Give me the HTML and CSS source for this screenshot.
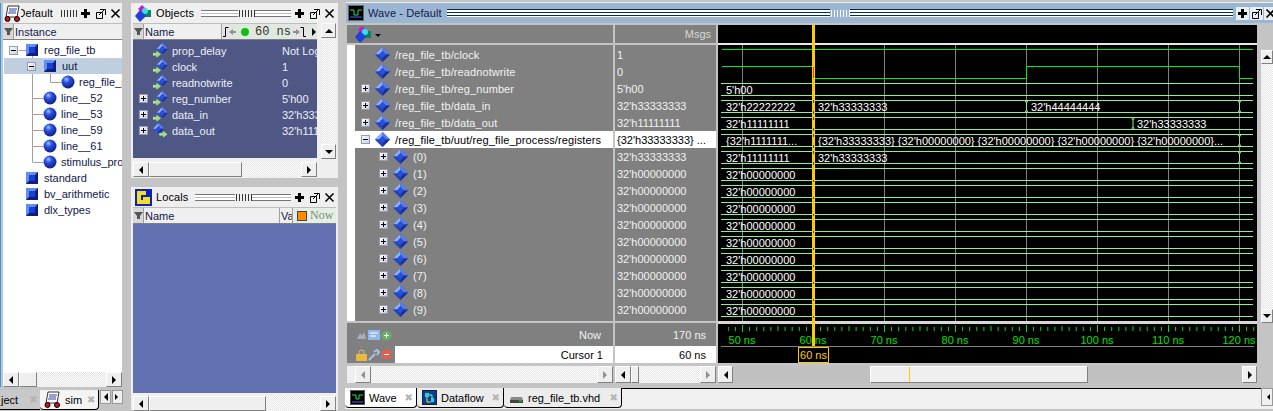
FILE: index.html
```html
<!DOCTYPE html>
<html lang="en">
  <head>
    <meta charset="UTF-8" />
    <title>Wave - Default</title>
    <link rel="stylesheet" href="styles.css">
  </head>
  <body>
    <!-- shared icons -->
    <svg class="defs" width="0" height="0">
      <defs>
        <radialGradient id="ballFill" cx="0.38" cy="0.3" r="0.75">
          <stop offset="0" stop-color="#9fc0ff" />
          <stop offset="0.35" stop-color="#2a50e0" />
          <stop offset="1" stop-color="#0a1a80" />
        </radialGradient>
        <linearGradient id="boxFill" x1="0" y1="0" x2="1" y2="1">
          <stop offset="0" stop-color="#ffffff" />
          <stop offset="1" stop-color="#c4cce8" />
        </linearGradient>
        <pattern id="ticks" width="71" height="8" x="742" y="324" patternUnits="userSpaceOnUse">
          <path d="M0.5 1v7M7.6 3v4M14.7 3v4M21.8 3v4M28.9 3v4M36 2v5M43.1 3v4M50.2 3v4M57.3 3v4M64.4 3v4" stroke="#00e000" fill="none" />
        </pattern>
      </defs>
      <symbol id="sq" viewBox="0 0 12 12">
        <rect width="12" height="12" fill="#1740dc" />
        <path d="M0 0H12L9 3H3V9L0 12Z" fill="#5f8fe8" />
        <path d="M12 0V12H0L3 9H9V3Z" fill="#10207a" />
      </symbol>
      <symbol id="ball" viewBox="0 0 14 14">
        <circle cx="7" cy="7" r="6.5" fill="url(#ballFill)" />
      </symbol>
      <symbol id="dia" viewBox="0 0 16 16">
        <path d="M8 0L16 8L8 16L0 8Z" fill="#2a4fd8" />
        <path d="M8 0L8 4L4 8H0Z" fill="#8fb0f4" />
        <path d="M8 0L16 8H12L8 4Z" fill="#5a80e8" />
        <path d="M16 8L8 16V12L12 8Z" fill="#1a2e98" />
        <path d="M0 8L8 16V12L4 8Z" fill="#2244c0" />
      </symbol>
      <symbol id="dia-in" viewBox="0 0 16 16">
        <path d="M10 0L16 6L10 12L4 6Z" fill="#2a4fd8" />
        <path d="M10 0V3L7 6H4Z" fill="#8fb0f4" />
        <path d="M10 0L16 6H13L10 3Z" fill="#5a80e8" />
        <path d="M16 6L10 12V9L13 6Z" fill="#1a2e98" />
        <path d="M0 11H4V9L8 12L4 15V13H0Z" fill="#7cf03c" stroke="#fff" stroke-width="0.5" />
      </symbol>
      <symbol id="dia-out" viewBox="0 0 16 16">
        <path d="M6 0L12 6L6 12L0 6Z" fill="#2a4fd8" />
        <path d="M6 0V3L3 6H0Z" fill="#8fb0f4" />
        <path d="M6 0L12 6H9L6 3Z" fill="#5a80e8" />
        <path d="M12 6L6 12V9L9 6Z" fill="#1a2e98" />
        <path d="M7 11H11V9L15 12L11 15V13H7Z" fill="#7cf03c" stroke="#fff" stroke-width="0.5" />
      </symbol>
      <symbol id="box-plus" viewBox="0 0 9 9">
        <rect x="0.5" y="0.5" width="8" height="8" fill="url(#boxFill)" stroke="#9a9aa8" />
        <path d="M2 4.5H7M4.5 2V7" stroke="#000" />
      </symbol>
      <symbol id="box-minus" viewBox="0 0 9 9">
        <rect x="0.5" y="0.5" width="8" height="8" fill="url(#boxFill)" stroke="#9a9aa8" />
        <path d="M2 4.5H7" stroke="#000" />
      </symbol>
      <symbol id="btn-plus" viewBox="0 0 13 13">
        <path d="M5 2H8V5H11V8H8V11H5V8H2V5H5Z" fill="#000" />
      </symbol>
      <symbol id="btn-undock" viewBox="0 0 13 13">
        <path d="M2.5 5.5H8.5V11.5H2.5ZM6 2.5H11.5V8" fill="none" stroke="#000" />
        <path d="M5 8L10 3" stroke="#000" />
      </symbol>
      <symbol id="btn-close" viewBox="0 0 13 13">
        <path d="M2.5 2.5L10.5 10.5M10.5 2.5L2.5 10.5" stroke="#000" stroke-width="1.6" />
      </symbol>
      <symbol id="filter" viewBox="0 0 9 9">
        <path d="M0 1H9L6 5V8H3V5Z" fill="#555" />
      </symbol>
      <symbol id="sim-icon" viewBox="0 0 17 17">
        <path d="M4 1H15L13 12H2Z" fill="#fff" stroke="#333" />
        <path d="M5 4H13M5 6H12M4 8H12" stroke="#3040a0" />
        <circle cx="3.5" cy="14" r="2.5" fill="#d01020" stroke="#000" />
        <circle cx="13" cy="14" r="2.5" fill="#d01020" stroke="#000" />
      </symbol>
      <symbol id="objects-icon" viewBox="0 0 17 17">
        <path d="M7 0L11 4L7 8L3 4Z" fill="#c020c0" />
        <rect x="8" y="5" width="8" height="7" fill="#108060" />
        <circle cx="10" cy="6" r="3" fill="#30e0f0" />
        <path d="M5 5L11 11L5 17L0 11Z" fill="#2040d8" />
      </symbol>
    </svg>

    <div class="desk">
      <!-- left: structure -->
      <div class="left-col">
        <div class="panel left-panel">
          <div class="title">
            <svg class="title-icon"><use href="#sim-icon" /></svg>
            <span class="title-text clip-d">Default</span>
            <span class="dots short"></span>
            <span class="title-btns">
              <svg><use href="#btn-plus" /></svg>
              <svg><use href="#btn-undock" /></svg>
              <svg><use href="#btn-close" /></svg>
            </span>
          </div>
          <div class="head">
            <span class="head-filter"><svg><use href="#filter" /></svg></span>
            <span class="head-cell grow">Instance</span>
          </div>
          <div class="tree">
            <svg class="tree-lines" width="119" height="190" viewBox="3 40 119 190">
              <path d="M19 50.5H26M32.5 56V162.5M37 66.5H44M50.5 72V82.5H61M33 98.5H43M33 114.5H43M33 130.5H43M33 146.5H43M33 162.5H43" stroke="#a0a0a0" fill="none" />
            </svg>
            <div class="node l0"><svg class="xbox"><use href="#box-minus" /></svg><svg class="sq"><use href="#sq" /></svg><span>reg_file_tb</span></div>
            <div class="node l1 picked"><svg class="xbox"><use href="#box-minus" /></svg><svg class="sq"><use href="#sq" /></svg><span>uut</span></div>
            <div class="node l2"><svg class="ball"><use href="#ball" /></svg><span>reg_file_process</span></div>
            <div class="node l3"><svg class="ball"><use href="#ball" /></svg><span>line__52</span></div>
            <div class="node l3"><svg class="ball"><use href="#ball" /></svg><span>line__53</span></div>
            <div class="node l3"><svg class="ball"><use href="#ball" /></svg><span>line__59</span></div>
            <div class="node l3"><svg class="ball"><use href="#ball" /></svg><span>line__61</span></div>
            <div class="node l3"><svg class="ball"><use href="#ball" /></svg><span>stimulus_process</span></div>
            <div class="node l4"><svg class="sq"><use href="#sq" /></svg><span>standard</span></div>
            <div class="node l4"><svg class="sq"><use href="#sq" /></svg><span>bv_arithmetic</span></div>
            <div class="node l4"><svg class="sq"><use href="#sq" /></svg><span>dlx_types</span></div>
          </div>
          <div class="hscroll">
            <span class="sb-btn"><i class="arrow left"></i></span>
            <span class="sb-thumb left-thumb"></span>
            <span class="sb-track"></span>
            <span class="sb-btn"><i class="arrow right"></i></span>
          </div>
        </div>
        <div class="left-tabs">
          <span class="ltab off">ject <b class="tab-x">&#10006;</b></span>
          <span class="ltab on"><svg class="tab-icon"><use href="#sim-icon" /></svg>sim <b class="tab-x">&#10006;</b></span>
          <span class="tab-nav"><i class="arrow left"></i></span>
          <span class="tab-nav"><i class="arrow right hollow"></i></span>
        </div>
      </div>

      <!-- middle: objects and locals -->
      <div class="mid-col">
        <div class="panel objects">
          <div class="title">
            <svg class="title-icon"><use href="#objects-icon" /></svg>
            <span class="title-text">Objects</span>
            <span class="lines"></span><span class="dots"></span><span class="lines"></span>
            <span class="title-btns">
              <svg><use href="#btn-plus" /></svg>
              <svg><use href="#btn-undock" /></svg>
              <svg><use href="#btn-close" /></svg>
            </span>
          </div>
          <div class="panel-body">
            <div class="panel-main">
              <div class="head">
                <span class="head-filter"><svg><use href="#filter" /></svg></span>
                <span class="head-cell grow">Name</span>
                <span class="cursor-tool">
                  <svg class="tool-btn" viewBox="0 0 15 14"><path d="M3.5 2.5H6.5M3.5 2.5V11.5M3.5 11.5H1" stroke="#000" fill="none" /><path d="M7 7L11 4V6H14V8H11V10Z" fill="#909090" /></svg>
                  <span class="green-dot"></span>
                  <span class="tool-time">60 ns</span>
                  <svg class="tool-btn" viewBox="0 0 15 14"><path d="M11.5 2.5H8.5M11.5 2.5V11.5M11.5 11.5H14" stroke="#000" fill="none" /><path d="M8 7L4 4V6H1V8H4V10Z" fill="#909090" /></svg>
                  <i class="arrow right"></i>
                </span>
              </div>
              <div class="obj-list">
                <div class="obj"><i class="obj-gap"></i><svg class="dia"><use href="#dia-in" /></svg><span class="obj-name">prop_delay</span><span>Not Logged</span></div>
                <div class="obj"><i class="obj-gap"></i><svg class="dia"><use href="#dia-in" /></svg><span class="obj-name">clock</span><span>1</span></div>
                <div class="obj"><i class="obj-gap"></i><svg class="dia"><use href="#dia-in" /></svg><span class="obj-name">readnotwrite</span><span>0</span></div>
                <div class="obj"><svg class="xbox"><use href="#box-plus" /></svg><svg class="dia"><use href="#dia-in" /></svg><span class="obj-name">reg_number</span><span>5'h00</span></div>
                <div class="obj"><svg class="xbox"><use href="#box-plus" /></svg><svg class="dia"><use href="#dia-in" /></svg><span class="obj-name">data_in</span><span>32'h33333333</span></div>
                <div class="obj"><svg class="xbox"><use href="#box-plus" /></svg><svg class="dia"><use href="#dia-out" /></svg><span class="obj-name">data_out</span><span>32'h11111111</span></div>
              </div>
              <div class="hscroll">
                <span class="sb-btn"><i class="arrow left"></i></span>
                <span class="sb-thumb obj-thumb"></span>
                <span class="sb-track"></span>
                <span class="sb-btn"><i class="arrow right"></i></span>
              </div>
            </div>
            <div class="vscroll">
              <span class="sb-btn"><i class="arrow up"></i></span>
              <span class="sb-track"></span>
              <span class="sb-btn"><i class="arrow down"></i></span>
            </div>
          </div>
        </div>
        <div class="panel locals">
          <div class="title">
            <svg class="title-icon" viewBox="0 0 17 17">
              <rect width="17" height="17" fill="#1020c0" />
              <path d="M2 2H11V6H6V11H15V15H2Z" fill="#f0e020" />
              <path d="M8 8H15V11H8Z" fill="#f0e020" />
            </svg>
            <span class="title-text">Locals</span>
            <span class="lines"></span><span class="dots"></span><span class="lines"></span>
            <span class="title-btns">
              <svg><use href="#btn-plus" /></svg>
              <svg><use href="#btn-undock" /></svg>
              <svg><use href="#btn-close" /></svg>
            </span>
          </div>
          <div class="head">
            <span class="head-filter"><svg><use href="#filter" /></svg></span>
            <span class="head-cell name-cell">Name</span>
            <span class="head-cell va-cell">Va</span>
            <span class="now-tool"><i class="orange-sq"></i>Now</span>
          </div>
          <div class="local-list"></div>
          <div class="hscroll">
            <span class="sb-btn"><i class="arrow left"></i></span>
            <span class="sb-thumb local-thumb"></span>
            <span class="sb-track"></span>
            <span class="sb-btn"><i class="arrow right"></i></span>
          </div>
        </div>
      </div>

      <!-- right: wave window -->
      <div class="wave-col">
        <div class="wave-title">
          <svg class="wave-icon" viewBox="0 0 16 16">
            <rect x="0.5" y="0.5" width="15" height="15" fill="#000" stroke="#666" />
            <path d="M2 5H6V10H10V5H14" stroke="#20e060" fill="none" />
            <path d="M2 12H14" stroke="#4060ff" />
          </svg>
          <span class="wave-name">Wave - Default</span>
          <span class="wave-lines"></span><span class="dots wave-dots"></span><span class="wave-lines"></span>
          <span class="title-btns wave-btns">
            <svg><use href="#btn-plus" /></svg>
            <svg><use href="#btn-undock" /></svg>
            <svg><use href="#btn-close" /></svg>
          </span>
        </div>
        <div class="wave-body">
          <div class="name-col">
            <div class="col-head"><svg class="head-icon"><use href="#objects-icon" /></svg><i class="caret"></i></div>
            <div class="sig-list">
              <div class="sig"><i class="nobox"></i><svg class="dia"><use href="#dia" /></svg><span>/reg_file_tb/clock</span></div>
              <div class="sig"><i class="nobox"></i><svg class="dia"><use href="#dia" /></svg><span>/reg_file_tb/readnotwrite</span></div>
              <div class="sig"><svg class="xbox"><use href="#box-plus" /></svg><svg class="dia"><use href="#dia" /></svg><span>/reg_file_tb/reg_number</span></div>
              <div class="sig"><svg class="xbox"><use href="#box-plus" /></svg><svg class="dia"><use href="#dia" /></svg><span>/reg_file_tb/data_in</span></div>
              <div class="sig"><svg class="xbox"><use href="#box-plus" /></svg><svg class="dia"><use href="#dia" /></svg><span>/reg_file_tb/data_out</span></div>
              <div class="sig picked"><svg class="xbox"><use href="#box-minus" /></svg><svg class="dia"><use href="#dia" /></svg><span>/reg_file_tb/uut/reg_file_process/registers</span></div>
              <div class="sig child"><svg class="xbox"><use href="#box-plus" /></svg><svg class="dia"><use href="#dia" /></svg><span>(0)</span></div>
              <div class="sig child"><svg class="xbox"><use href="#box-plus" /></svg><svg class="dia"><use href="#dia" /></svg><span>(1)</span></div>
              <div class="sig child"><svg class="xbox"><use href="#box-plus" /></svg><svg class="dia"><use href="#dia" /></svg><span>(2)</span></div>
              <div class="sig child"><svg class="xbox"><use href="#box-plus" /></svg><svg class="dia"><use href="#dia" /></svg><span>(3)</span></div>
              <div class="sig child"><svg class="xbox"><use href="#box-plus" /></svg><svg class="dia"><use href="#dia" /></svg><span>(4)</span></div>
              <div class="sig child"><svg class="xbox"><use href="#box-plus" /></svg><svg class="dia"><use href="#dia" /></svg><span>(5)</span></div>
              <div class="sig child"><svg class="xbox"><use href="#box-plus" /></svg><svg class="dia"><use href="#dia" /></svg><span>(6)</span></div>
              <div class="sig child"><svg class="xbox"><use href="#box-plus" /></svg><svg class="dia"><use href="#dia" /></svg><span>(7)</span></div>
              <div class="sig child"><svg class="xbox"><use href="#box-plus" /></svg><svg class="dia"><use href="#dia" /></svg><span>(8)</span></div>
              <div class="sig child"><svg class="xbox"><use href="#box-plus" /></svg><svg class="dia"><use href="#dia" /></svg><span>(9)</span></div>
            </div>
            <div class="col-foot">
              <div class="foot-now">
                <span class="foot-icons">
                  <svg viewBox="0 0 11 11" width="11" height="11"><path d="M1 9L4 3L6 6L8 2L10 9Z" fill="#a8b0c0" /></svg>
                  <svg viewBox="0 0 12 12" width="12" height="12"><rect y="1" width="12" height="10" fill="#90b8e8" /><path d="M2 4H10M2 7H8" stroke="#fff" /></svg>
                  <svg viewBox="0 0 11 11" width="11" height="11"><circle cx="5.5" cy="5.5" r="5" fill="#68b068" /><path d="M3 5.5H8M5.5 3V8" stroke="#fff" /></svg>
                </span>
                <span>Now</span>
              </div>
              <div class="foot-cursor">
                <span class="foot-icons">
                  <svg viewBox="0 0 11 12" width="11" height="12"><path d="M3 6V3.5A2.5 2.5 0 0 1 8 3.5V6" fill="none" stroke="#d8c080" /><rect y="5" width="11" height="7" fill="#e8b840" /></svg>
                  <svg viewBox="0 0 12 12" width="12" height="12"><path d="M1 11L7 5M6 3L9 1L11 3L9 6" stroke="#a8c0e8" stroke-width="2" fill="none" /></svg>
                  <svg viewBox="0 0 11 11" width="11" height="11"><circle cx="5.5" cy="5.5" r="5" fill="#e06050" /><path d="M3 5.5H8" stroke="#fff" /></svg>
                </span>
                <span class="foot-white">Cursor 1</span>
              </div>
            </div>
            <div class="hscroll name-scroll">
              <span class="sb-btn"><i class="arrow left dim"></i></span>
              <span class="sb-track"></span>
              <span class="sb-btn"><i class="arrow right dim"></i></span>
            </div>
          </div>
          <div class="val-col">
            <div class="col-head msgs">Msgs</div>
            <div class="val-list">
              <div class="val">1</div>
              <div class="val">0</div>
              <div class="val">5'h00</div>
              <div class="val">32'h33333333</div>
              <div class="val">32'h11111111</div>
              <div class="val picked">{32'h33333333} ...</div>
              <div class="val">32'h33333333</div>
              <div class="val">32'h00000000</div>
              <div class="val">32'h00000000</div>
              <div class="val">32'h00000000</div>
              <div class="val">32'h00000000</div>
              <div class="val">32'h00000000</div>
              <div class="val">32'h00000000</div>
              <div class="val">32'h00000000</div>
              <div class="val">32'h00000000</div>
              <div class="val">32'h00000000</div>
            </div>
            <div class="col-foot">
              <div class="foot-now val-now">170 ns</div>
              <div class="foot-white val-cursor">60 ns</div>
            </div>
            <div class="hscroll">
              <span class="sb-btn"><i class="arrow left"></i></span>
              <span class="sb-thumb val-thumb"></span>
              <span class="sb-track"></span>
              <span class="sb-btn"><i class="arrow right dim"></i></span>
            </div>
          </div>
          <div class="plot-col">
            <!-- viewBox uses page coordinates -->
            <svg class="plot" width="539" height="338" viewBox="718 25 539 338">
              <rect x="718" y="25" width="539" height="338" fill="#000" />
              <rect x="718" y="43" width="539" height="2" fill="#e8e8e8" />
              <rect x="718" y="321" width="539" height="3" fill="#d8d8d8" />
              <path class="grid" d="M742.5 45V321M884.5 45V321M955.5 45V321M1026.5 45V321M1097.5 45V321M1168.5 45V321M1239.5 45V321" />
              <path class="logic" d="M722 49.5H1253M722 66.5H813.5V78.5H1026.5V66.5H1239.5V78.5H1253" />
              <path class="bus" d="M721 83.5H1253M721 95.5H1253
                M721 100.5H1253M721 112.5H1253
                M721 117.5H1253M721 129.5H1253
                M721 134.5H1253M721 146.5H1253
                M721 151.5H1253M721 163.5H1253
                M721 168.5H1253M721 180.5H1253
                M721 185.5H1253M721 197.5H1253
                M721 202.5H1253M721 214.5H1253
                M721 219.5H1253M721 231.5H1253
                M721 236.5H1253M721 248.5H1253
                M721 253.5H1253M721 265.5H1253
                M721 270.5H1253M721 282.5H1253
                M721 287.5H1253M721 299.5H1253
                M721 304.5H1253M721 316.5H1253" />
              <!-- bus transitions -->
              <path class="bus" d="M1025 100.5L1026.5 103V110L1025 112.5M1028 100.5L1026.5 103M1026.5 110L1028 112.5
                M1238 100.5L1239.5 103V110L1238 112.5M1241 100.5L1239.5 103M1239.5 110L1241 112.5
                M1131.5 117.5L1133 120V127L1131.5 129.5M1134.5 117.5L1133 120M1133 127L1134.5 129.5
                M1238 134.5L1239.5 137V144L1238 146.5M1241 134.5L1239.5 137M1239.5 144L1241 146.5
                M1238 151.5L1239.5 154V161L1238 163.5M1241 151.5L1239.5 154M1239.5 161L1241 163.5" />
              <g class="bus-text">
                <text x="726" y="94">5'h00</text>
                <text x="726" y="111">32'h22222222</text>
                <text x="818" y="111">32'h33333333</text>
                <text x="1031" y="111">32'h44444444</text>
                <text x="726" y="128">32'h11111111</text>
                <text x="1137" y="128">32'h33333333</text>
                <text x="726" y="145">{32'h1111111...</text>
                <text x="818" y="145">{32'h33333333} {32'h00000000} {32'h00000000} {32'h00000000} {32'h00000000}...</text>
                <text x="726" y="162">32'h11111111</text>
                <text x="818" y="162">32'h33333333</text>
                <text x="726" y="179">32'h00000000</text>
                <text x="726" y="196">32'h00000000</text>
                <text x="726" y="213">32'h00000000</text>
                <text x="726" y="230">32'h00000000</text>
                <text x="726" y="247">32'h00000000</text>
                <text x="726" y="264">32'h00000000</text>
                <text x="726" y="281">32'h00000000</text>
                <text x="726" y="298">32'h00000000</text>
                <text x="726" y="315">32'h00000000</text>
              </g>
              <!-- time axis -->
              <rect x="728" y="324" width="528" height="8" fill="url(#ticks)" shape-rendering="crispEdges" />
              <g class="time-text">
                <text x="742" y="344">50 ns</text>
                <text x="813" y="344">60 ns</text>
                <text x="884" y="344">70 ns</text>
                <text x="955" y="344">80 ns</text>
                <text x="1026" y="344">90 ns</text>
                <text x="1097" y="344">100 ns</text>
                <text x="1168" y="344">110 ns</text>
                <text x="1239" y="344">120 ns</text>
              </g>
              <path class="axis" d="M721 346.5H1254" />
              <!-- cursor -->
              <rect x="812" y="25" width="3" height="321" fill="#ffcc00" />
              <path d="M813.5 67V78" stroke="#ff3000" />
              <path class="cross" d="M813.5 100V103M813.5 111V114M813.5 117V120M813.5 128V131M813.5 134V137M813.5 145V148M813.5 151V154M813.5 162V165M813.5 180V182M813.5 197V199M813.5 214V216M813.5 231V233M813.5 248V250M813.5 265V267M813.5 282V284M813.5 299V301M813.5 316V318" />
              <rect class="cursor-box" x="798.5" y="347.5" width="30" height="15" />
              <text class="cursor-text" x="813.5" y="359">60 ns</text>
            </svg>
            <div class="wave-scroll">
              <span class="sb-btn"><i class="arrow left"></i></span>
              <span class="ws-track"><span class="ws-thumb"><i class="ws-mark"></i></span></span>
              <span class="sb-btn"><i class="arrow right"></i></span>
            </div>
          </div>
          <div class="plot-vscroll">
            <span class="sb-btn"><i class="arrow up"></i></span>
            <span class="sb-track"></span>
            <span class="sb-btn"><i class="arrow down"></i></span>
          </div>
        </div>
        <div class="wave-tabs">
          <span class="wtab on">
            <svg viewBox="0 0 15 15" width="15" height="15"><rect x="0.5" y="0.5" width="14" height="14" fill="#000" stroke="#555" /><path d="M2 5H6V9H9V5H13" stroke="#20e060" fill="none" /><path d="M2 12H13" stroke="#5060ff" /></svg>
            <span>Wave</span> <b class="tab-x">&#10006;</b>
          </span>
          <span class="wtab flow">
            <svg viewBox="0 0 15 15" width="15" height="15"><rect x="0.5" y="0.5" width="14" height="14" fill="#0040a0" stroke="#222" /><path d="M3 3H7V7H3ZM9 8H12V12H9Z" fill="#20d0f0" /><path d="M7 5H10V8M5 7V12H9" stroke="#f0e020" fill="none" /></svg>
            <span>Dataflow</span> <b class="tab-x">&#10006;</b>
          </span>
          <span class="wtab src">
            <svg viewBox="0 0 15 15" width="15" height="15"><path d="M2 7H13L14 10V13H1V10Z" fill="#8a8a8a" /><path d="M1 10H14V13H1Z" fill="#444" /><path d="M10 11H13" stroke="#30e030" /></svg>
            <span>reg_file_tb.vhd</span> <b class="tab-x">&#10006;</b>
          </span>
          <span class="wtab-rest"></span>
          <span class="wtab-nav"><i class="arrow left hollow"></i></span>
        </div>
      </div>
    </div>
  </body>
</html>
```

FILE: styles.css
```css
* {
  box-sizing: border-box;
}

body {
  margin: 0;
  font-family: "Liberation Sans", Arial, sans-serif;
  font-size: 11px;
  color: #000;
}

.defs {
  position: absolute;
}

.desk {
  display: flex;
  width: 1273px;
  height: 411px;
  overflow: hidden;
  background: #c4c4c4;
}

/* shared panel parts */
.panel {
  display: flex;
  flex-direction: column;
  background: #efefef;
}

.title {
  display: flex;
  align-items: center;
  height: 20px;
  flex: none;
  background: #efefef;
  padding-left: 2px;
}

.title-icon {
  width: 17px;
  height: 17px;
  flex: none;
}

.title-text {
  margin: 0 5px 0 3px;
  font-size: 11px;
  letter-spacing: 0.1px;
  white-space: nowrap;
}

.clip-d {
  width: 38px;
  margin-left: 0;
  overflow: hidden;
  direction: rtl;
  text-align: left;
}

.lines {
  flex: 1;
  height: 7px;
  background: linear-gradient(#777 1px, #fff 1px, #fff 3px, #bbb 3px, #bbb 4px, #fff 4px, #fff 6px, #777 6px);
}

.dots {
  flex: none;
  width: 17px;
  height: 7px;
  background: radial-gradient(circle, #333 0.6px, transparent 0.8px) 0 0 / 3px 2px;
}

.dots.short {
  margin-left: 2px;
}

.title-btns {
  display: flex;
  margin-left: auto;
  flex: none;
}

.title-btns svg {
  width: 13px;
  height: 13px;
  margin-left: 1px;
}

.head {
  display: flex;
  height: 17px;
  flex: none;
  background: #efefef;
  border-top: 1px solid #bdbdbd;
  border-bottom: 1px solid #808080;
}

.head-filter {
  width: 11px;
  flex: none;
  display: flex;
  align-items: center;
  justify-content: center;
  background: #d8d8d8;
  border-right: 1px solid #a0a0a0;
}

.head-filter svg {
  width: 9px;
  height: 9px;
}

.head-cell {
  padding-left: 1px;
  line-height: 16px;
  color: #10184a;
  white-space: nowrap;
  overflow: hidden;
}

.grow {
  flex: 1;
}

/* scrollbars */
.hscroll,
.wave-scroll {
  display: flex;
  height: 15px;
  flex: none;
}

.vscroll,
.plot-vscroll {
  display: flex;
  flex-direction: column;
  flex: none;
}

.sb-btn {
  display: flex;
  align-items: center;
  justify-content: center;
  flex: none;
  width: 16px;
  height: 15px;
  background: #efefef;
  border: 1px solid;
  border-color: #fff #808080 #808080 #fff;
}

.sb-thumb {
  flex: none;
  background: #efefef;
  border: 1px solid;
  border-color: #fff #808080 #808080 #fff;
}

.sb-track {
  flex: 1;
  background: repeating-conic-gradient(#fff 0 25%, #e4e4e4 0 50%) 0 0 / 2px 2px;
}

.arrow {
  display: block;
  width: 0;
  height: 0;
  border: 4px solid transparent;
}

.arrow.left {
  border-left-width: 0;
  border-right-color: #000;
}

.arrow.right {
  border-right-width: 0;
  border-left-color: #000;
}

.arrow.up {
  border-top-width: 0;
  border-bottom-color: #000;
}

.arrow.down {
  border-bottom-width: 0;
  border-top-color: #000;
}

.arrow.left.dim {
  border-right-color: #909090;
}

.arrow.right.dim {
  border-left-color: #909090;
}

.arrow.hollow {
  border-width: 3px;
}

.tab-x {
  font-size: 10px;
  color: #b4b4b4;
  font-family: "DejaVu Sans", sans-serif;
  font-weight: normal;
}

.xbox {
  width: 9px;
  height: 9px;
  flex: none;
}

/* left column */
.left-col {
  width: 125px;
  flex: none;
  display: flex;
  flex-direction: column;
  padding-top: 3px;
}

.left-panel {
  margin-left: 3px;
  width: 119px;
  height: 384px;
  box-shadow: -2px 0 0 #c4c4c4, -3px 0 0 #3a96e8;
}

.left-panel .title {
  padding-left: 1px;
}

.left-panel .title-btns svg {
  margin-left: 2px;
}

.left-thumb {
  width: 18px;
}

.tree {
  position: relative;
  flex: 1;
  background: #fff;
  padding-top: 2px;
  overflow: hidden;
}

.tree-lines {
  position: absolute;
  top: 0;
  left: 0;
}

.node {
  position: relative;
  display: flex;
  align-items: center;
  height: 16px;
  color: #10184a;
  white-space: nowrap;
}

.node .xbox {
  margin-right: 8px;
}

.node .sq {
  width: 12px;
  height: 12px;
  margin-right: 6px;
  flex: none;
}

.node .ball {
  width: 14px;
  height: 14px;
  margin-right: 4px;
  flex: none;
}

.node.l0 {
  padding-left: 6px;
}

.node.l1 {
  padding-left: 24px;
}

.node.l2 {
  padding-left: 58px;
}

.node.l3 {
  padding-left: 40px;
}

.node.l4 {
  padding-left: 23px;
}

.node.picked {
  background: #c0cfdf;
  margin-left: 1px;
  padding-left: 23px;
}

.left-tabs {
  display: flex;
  height: 21px;
  margin-top: 3px;
  flex: none;
}

.ltab {
  display: flex;
  align-items: center;
  gap: 5px;
  height: 20px;
  flex: none;
}

.ltab.off {
  width: 40px;
  padding-left: 1px;
  background: #c8c8c8;
  border-bottom: 1px solid #000;
}

.ltab.off .tab-x {
  margin-left: 6px;
}

.ltab.on {
  width: 59px;
  padding-left: 4px;
  background: #f4f4f4;
  border-right: 1px solid #000;
  border-bottom: 1px solid #000;
  border-radius: 0 0 4px 4px;
}

.tab-icon {
  width: 17px;
  height: 17px;
  flex: none;
  margin-right: -1px;
}

.tab-nav {
  display: flex;
  align-items: center;
  justify-content: center;
  width: 11px;
  height: 14px;
  margin: 0 0 0 1px;
  background: #efefef;
  border: 1px solid #999;
  flex: none;
}

.tab-nav:first-of-type {
  margin-left: 3px;
}

/* middle column */
.mid-col {
  width: 207px;
  margin-left: 6px;
  flex: none;
  padding-top: 3px;
}

.objects {
  height: 175px;
  margin-bottom: 9px;
  padding: 0 2px;
}

.panel-body {
  display: flex;
  flex: 1;
}

.panel-main {
  width: 184px;
  display: flex;
  flex-direction: column;
}

.objects .title-btns svg {
  margin-left: 2px;
}

.objects .title-text,
.locals .title-text {
  margin-left: 4px;
  margin-right: 7px;
}

.cursor-tool {
  display: flex;
  align-items: center;
  width: 96px;
  flex: none;
  background: #dfe9df;
  border-left: 1px solid #a0a0a0;
}

.tool-btn {
  width: 15px;
  height: 14px;
  flex: none;
  background: #e4e4e4;
}

.green-dot {
  width: 8px;
  height: 8px;
  margin: 0 6px 0 4px;
  border-radius: 50%;
  background: #10c010;
  flex: none;
}

.tool-time {
  width: 37px;
  font-family: "Liberation Mono", monospace;
  font-size: 12px;
  color: #333;
  white-space: pre;
  flex: none;
}

.cursor-tool .arrow {
  margin-left: 5px;
}

.obj-list {
  height: 118px;
  padding-top: 2px;
  margin-bottom: 4px;
  background: #4f5785;
  color: #eceef6;
  overflow: hidden;
  flex: none;
}

.obj {
  display: flex;
  align-items: center;
  height: 16px;
  padding-left: 6px;
  white-space: nowrap;
}

.obj span {
  padding-top: 1px;
}

.obj .xbox {
  margin-right: 5px;
}

.obj-gap {
  width: 14px;
  flex: none;
}

.obj .dia {
  width: 15px;
  height: 15px;
  margin-right: 4px;
  flex: none;
}

.obj-name {
  width: 110px;
  flex: none;
}

.obj-thumb {
  width: 93px;
}

.vscroll {
  width: 15px;
  margin-left: 4px;
  height: 136px;
}

.vscroll .sb-btn {
  width: 15px;
}

.locals {
  height: 223px;
  padding: 0 2px;
}

.locals .title-btns svg {
  margin-left: 2px;
}

.name-cell {
  width: 136px;
  flex: none;
  border-right: 1px solid #a0a0a0;
}

.va-cell {
  width: 12px;
  flex: none;
}

.now-tool {
  display: flex;
  align-items: center;
  gap: 4px;
  flex: 1;
  padding-left: 5px;
  background: #e4efe4;
  border-left: 1px solid #a0a0a0;
  font-family: "Liberation Serif", serif;
  font-size: 12px;
  color: #808880;
}

.orange-sq {
  width: 8px;
  height: 8px;
  background: #ff8c00;
  outline: 1px solid #444;
  flex: none;
}

.local-list {
  height: 169px;
  margin-bottom: 3px;
  background: #6070b0;
  flex: none;
}

.local-thumb {
  width: 117px;
}

/* wave window */
.wave-col {
  flex: 1;
  margin-left: 7px;
  display: flex;
  flex-direction: column;
  padding-top: 3px;
  min-width: 0;
}

.wave-title {
  display: flex;
  align-items: center;
  height: 20px;
  flex: none;
  margin-left: 1px;
  background: #9ab6d3;
  box-shadow: 0 -1px 0 #efefef;
  overflow: hidden;
}

.wave-icon {
  width: 16px;
  height: 16px;
  margin-left: 2px;
  flex: none;
}

.wave-name {
  margin: 0 5px 0 4px;
  color: #10204a;
  letter-spacing: 0.1px;
  white-space: nowrap;
}

.wave-lines {
  flex: 1;
  height: 8px;
  background: linear-gradient(#0a2a50 1px, #fff 1px, #fff 3px, #0a2a50 3px, #0a2a50 4px, #fff 4px, #fff 6px, #0a2a50 6px, #0a2a50 7px, #fff 7px);
}

.wave-dots {
  width: 20px;
  background-image: radial-gradient(circle, #fff 0.7px, transparent 0.9px);
}

.wave-btns {
  width: 40px;
  margin-left: 3px;
  margin-right: -3px;
}

.wave-btns svg {
  flex: none;
  margin-left: 0;
  margin-right: 1px;
  background: #e8eef4;
}

.wave-body {
  display: flex;
  height: 363px;
  flex: none;
  padding: 2px 0 0 2px;
  background: #c4c4c4;
}

.name-col,
.val-col {
  display: flex;
  flex-direction: column;
  flex: none;
}

.name-col {
  width: 266px;
  margin-right: 2px;
}

.val-col {
  width: 101px;
  margin-right: 2px;
}

.wave-body .hscroll,
.wave-body .wave-scroll {
  height: 17px;
}

.wave-body .hscroll .sb-btn,
.wave-body .wave-scroll .sb-btn {
  height: 17px;
}

.col-head {
  height: 18px;
  flex: none;
  margin-bottom: 2px;
  background: #808080;
  display: flex;
  align-items: center;
}

.head-icon {
  width: 17px;
  height: 17px;
  margin-left: 8px;
}

.caret {
  width: 0;
  height: 0;
  margin-left: 3px;
  margin-top: 3px;
  border: 3px solid transparent;
  border-bottom-width: 0;
  border-top-color: #000;
}

.msgs {
  justify-content: flex-end;
  padding-right: 5px;
  color: #d8d8d8;
}

.sig-list {
  height: 276px;
  flex: none;
  padding-top: 1px;
  background: #808080;
  border-left: 8px solid #fff;
  margin-bottom: 2px;
  color: #f2f2f2;
}

.sig {
  display: flex;
  align-items: center;
  height: 17px;
  padding-left: 6px;
  white-space: nowrap;
}

.sig span {
  padding-top: 1px;
  letter-spacing: 0.1px;
}

.sig .xbox,
.nobox {
  width: 9px;
  flex: none;
  margin-right: 5px;
}

.sig .dia {
  width: 15px;
  height: 15px;
  margin-right: 5px;
  flex: none;
}

.sig.child {
  padding-left: 24px;
}

.sig.picked,
.val.picked {
  background: #fff;
  color: #000;
}

.val-list {
  height: 276px;
  flex: none;
  padding-top: 1px;
  background: #808080;
  margin-bottom: 2px;
  color: #f2f2f2;
}

.val {
  height: 17px;
  line-height: 18px;
  padding-left: 2px;
  white-space: nowrap;
  overflow: hidden;
}

.col-foot {
  height: 40px;
  flex: none;
  background: #808080;
  margin-bottom: 3px;
}

.foot-now {
  display: flex;
  align-items: center;
  justify-content: space-between;
  height: 23px;
  padding: 1px 12px 0 0;
  color: #f0f0f0;
}

.foot-cursor {
  display: flex;
  height: 17px;
}

.foot-icons {
  display: flex;
  align-items: center;
  gap: 1px;
  width: 48px;
  padding-left: 9px;
  flex: none;
}

.foot-white {
  flex: 1;
  height: 17px;
  line-height: 18px;
  text-align: right;
  padding-right: 10px;
  background: #fff;
  color: #000;
}

.val-now {
  justify-content: flex-end;
  padding-right: 10px;
}

.val-cursor {
  flex: none;
}

.name-scroll {
  padding-left: 8px;
  background: #efefef;
}

.val-thumb {
  width: 8px;
}

.plot-col {
  display: flex;
  flex-direction: column;
  width: 539px;
  flex: none;
}

.plot {
  display: block;
  flex: none;
  margin-bottom: 3px;
}

.plot text {
  font-family: "Liberation Sans", Arial, sans-serif;
  font-size: 11px;
}

.grid {
  stroke: #808080;
  fill: none;
}

.logic {
  stroke: #00f000;
  fill: none;
}

.bus {
  stroke: #90ee90;
  fill: none;
}

.bus-text {
  fill: #fff;
}

.time-text {
  fill: #00e000;
  text-anchor: middle;
}

.axis {
  stroke: #808080;
}

.cross {
  stroke: #4040c0;
}

.cursor-box {
  fill: #000;
  stroke: #ffcc00;
}

.plot .cursor-text {
  fill: #ffcc00;
  text-anchor: middle;
}

.wave-scroll .sb-btn {
  width: 15px;
}

.ws-track {
  display: block;
  flex: 1;
  padding-left: 137px;
  background: #c0c0c0;
}

.ws-thumb {
  display: block;
  position: relative;
  width: 218px;
  height: 17px;
  background: #efefef;
  border: 1px solid;
  border-color: #fff #808080 #808080 #fff;
}

.ws-mark {
  position: absolute;
  top: 0;
  left: 38px;
  width: 1px;
  height: 15px;
  background: #ffcc00;
}

.plot-vscroll {
  width: 12px;
  margin-left: 4px;
  padding-top: 25px;
  height: 298px;
}

.plot-vscroll .sb-btn {
  width: 12px;
  height: 14px;
}

.wave-tabs {
  display: flex;
  height: 21px;
  margin-top: 2px;
  flex: none;
  background: #f0f0f0;
}

.wtab {
  display: flex;
  align-items: center;
  gap: 4px;
  height: 20px;
  padding: 0 3px 0 5px;
  flex: none;
  background: #ececec;
  border-right: 1px solid #000;
  border-bottom: 1px solid #000;
  border-radius: 0 0 4px 4px;
}

.wtab.on {
  background: #fff;
  width: 72px;
}

.wtab.flow {
  width: 87px;
}

.wtab.src {
  width: 118px;
}

.wtab b {
  margin-left: auto;
}

.wtab-rest {
  flex: 1;
  border-top: 1px solid #000;
}

.wtab-nav {
  display: flex;
  align-items: center;
  justify-content: center;
  width: 12px;
  height: 18px;
  background: #efefef;
  border: 1px solid #999;
  flex: none;
}
```
